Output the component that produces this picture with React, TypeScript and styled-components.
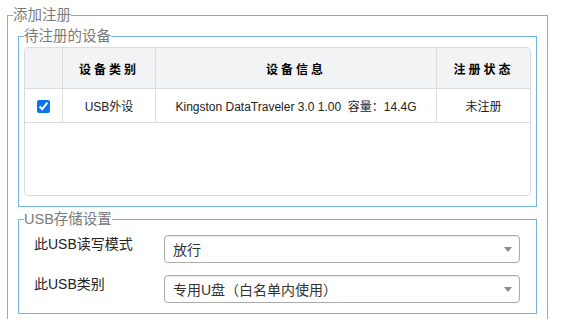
import styled, {createGlobalStyle} from "styled-components";

const Global = createGlobalStyle`
  body {
    margin: 0;
    background: #fff;
    font-family: "Liberation Sans", "Noto Sans CJK SC", sans-serif;
    color: #333;
  }
`

const Page = styled.div`
  padding: 5px 14px 0 7px;
`

const Group = styled.fieldset<{ $inner?: boolean }>`
  margin: ${p => p.$inner ? "0 5px" : "0"};
  padding: ${p => p.$inner ? "0 5px 10px" : "1px 5px 40px"};
  border: 1px solid #74b5e6;
  min-width: 0;

  & + & {
    margin-top: 2px;
  }
`

const Legend = styled.legend`
  padding: 0;
  font-size: 14.5px;
  line-height: 20px;
  color: #7a7a7a;
`

const TableBox = styled.div`
  margin-top: 1px;
  height: 147px;
  border: 1px solid #dcdcdc;
  border-radius: 4px;
  overflow: hidden;
`

const Table = styled.table`
  width: 100%;
  border-collapse: collapse;
  table-layout: fixed;
  font-size: 12px;
`

const Th = styled.th<{ $w?: number }>`
  width: ${p => p.$w ? `${p.$w}px` : "auto"};
  height: 40px;
  padding: 0;
  background: #f2f3f5;
  border-bottom: 1px solid #dcdcdc;
  border-left: 1px solid #dcdcdc;
  font-weight: bold;
  letter-spacing: 3px;
  color: #000;
  text-align: center;

  &:first-child {
    border-left: none;
  }
`

const Td = styled.td`
  height: 33px;
  padding: 0;
  border-bottom: 1px solid #dcdcdc;
  border-left: 1px solid #dcdcdc;
  text-align: center;
  color: #222;
  white-space: pre;

  &:first-child {
    border-left: none;
  }
`

const Check = styled.input`
  width: 13px;
  height: 13px;
  margin: 0 0 0 -1px;
  vertical-align: middle;
  accent-color: #0a74f0;
`

const Form = styled.div`
  display: grid;
  grid-template-columns: 130px 1fr;
  row-gap: 12px;
  padding: 6px 11px 0 10px;
`

const Label = styled.div`
  font-size: 14px;
  line-height: 20px;
  margin-top: -1px;
  color: #222;
`

const Select = styled.div`
  position: relative;
  height: 26px;
  border: 1px solid #ababab;
  border-radius: 4px;
  box-shadow: inset 0 1px 1px rgba(0, 0, 0, 0.08);
  padding-left: 8px;
  display: flex;
  align-items: center;
  font-size: 14px;
  color: #333;

  &::after {
    content: "";
    position: absolute;
    right: 7px;
    top: 11px;
    border-left: 4px solid transparent;
    border-right: 4px solid transparent;
    border-top: 5px solid #8a8a8a;
  }
`

const rows = [
    {type: "USB外设", info: "Kingston DataTraveler 3.0 1.00  容量：14.4G", state: "未注册"},
]

export default function App() {
    return (
        <Page>
            <Global/>
            <Group>
                <Legend>添加注册</Legend>
                <Group $inner>
                    <Legend>待注册的设备</Legend>
                    <TableBox>
                        <Table>
                            <thead>
                            <tr>
                                <Th $w={37}/>
                                <Th $w={92}>设备类别</Th>
                                <Th>设备信息</Th>
                                <Th $w={93}>注册状态</Th>
                            </tr>
                            </thead>
                            <tbody>
                            {rows.map(r => (
                                <tr key={r.info}>
                                    <Td><Check type="checkbox" defaultChecked/></Td>
                                    <Td>{r.type}</Td>
                                    <Td>{r.info}</Td>
                                    <Td>{r.state}</Td>
                                </tr>
                            ))}
                            </tbody>
                        </Table>
                    </TableBox>
                </Group>
                <Group $inner>
                    <Legend>USB存储设置</Legend>
                    <Form>
                        <Label>此USB读写模式</Label>
                        <Select>放行</Select>
                        <Label>此USB类别</Label>
                        <Select>专用U盘（白名单内使用）</Select>
                    </Form>
                </Group>
            </Group>
        </Page>
    )
}
